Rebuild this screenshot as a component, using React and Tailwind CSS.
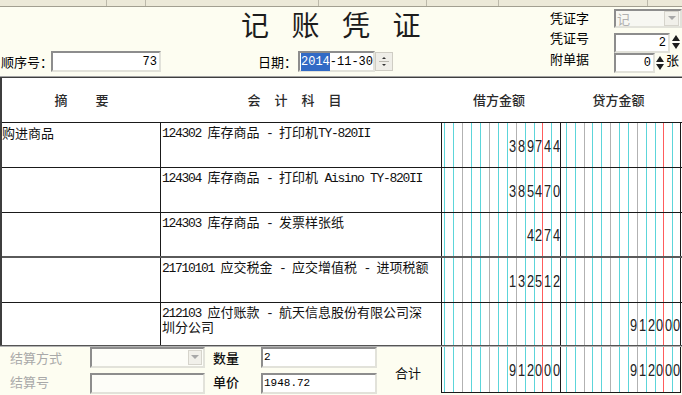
import React from 'react';

const F = "font-['Noto_Sans_CJK_SC','Liberation_Sans',sans-serif]";

const W = { 3: 'w-[3px]', 6: 'w-[6px]', 8: 'w-[8px]', 9: 'w-[9px]' };
const C = {
  c: 'border-r-[#5cd5da]',
  g: 'border-r-[#b2b2b2]',
  r: 'border-r-[#ff5c5c]',
  k: 'border-r-[#1a1a1a]',
};

const DEBIT = [[3,'c'],[9,'c'],[9,'g'],[9,'c'],[9,'c'],[9,'g'],[9,'c'],[9,'c'],[9,'g'],[9,'c'],[9,'c'],[8,'r'],[9,'c'],[9,'k']];
const CREDIT = [[6,'c'],[9,'c'],[9,'g'],[8,'c'],[9,'c'],[9,'g'],[9,'c'],[9,'c'],[9,'g'],[9,'c'],[9,'c'],[8,'r'],[9,'c'],[8,'k']];

function Money({ cells, value }) {
  const n = cells.length;
  const digits = (value || '').padStart(n, ' ');
  return cells.map(([w, c], i) => (
    <div key={i} className={`${W[w]} ${C[c]} shrink-0 h-full border-r flex items-center justify-center pt-[3px]`}>
      <span className="block scale-x-[0.8] font-['Liberation_Sans',sans-serif] text-[16px] leading-none text-[#222]">
        {digits[i] === ' ' ? '' : digits[i]}
      </span>
    </div>
  ));
}

function Mixed({ text }) {
  const parts = text.split(/([\x00-\x7F]+)/).filter(Boolean);
  return parts.map((p, i) =>
    /^[\x00-\x7F]+$/.test(p) ? (
      <span key={i} className="font-['Liberation_Mono',monospace] text-[13px] tracking-[-1.3px] whitespace-pre">{p}</span>
    ) : (
      <span key={i}>{p}</span>
    )
  );
}

function Sunken({ className = '', children }) {
  return (
    <div className={`shrink-0 border-2 border-t-[#8d8d8d] border-l-[#8d8d8d] border-r-[#e2e2da] border-b-[#e2e2da] ${className}`}>
      {children}
    </div>
  );
}

function SpinArrows({ className = '' }) {
  return (
    <svg className={className} viewBox="0 0 10 18" width="10" height="18">
      <polygon points="1,8 5,2 9,8" fill="#1e1e1e" />
      <line x1="0" y1="9" x2="10" y2="9" stroke="#ffffff" strokeWidth="1" />
      <polygon points="1,10 9,10 5,16" fill="#1e1e1e" />
    </svg>
  );
}

function DropBtn({ className = '' }) {
  return (
    <div className={`shrink-0 flex items-center justify-center bg-[#f1f0ea] border border-[#d6d4cc] ${className}`}>
      <svg viewBox="0 0 8 5" width="8" height="5">
        <polygon points="0,0 8,0 4,4" fill="#a8a8a8" />
      </svg>
    </div>
  );
}

const ROWS = [
  { s: '购进商品', k: ['124302 库存商品 - 打印机TY-820II'], d: '389744', c: '' },
  { s: '', k: ['124304 库存商品 - 打印机 Aisino TY-820II'], d: '385470', c: '' },
  { s: '', k: ['124303 库存商品 - 发票样张纸'], d: '4274', c: '', thick: true },
  { s: '', k: ['21710101 应交税金 - 应交增值税 - 进项税额'], d: '132512', c: '' },
  { s: '', k: ['212103 应付账款 - 航天信息股份有限公司深', '圳分公司'], d: '', c: '912000', last: true },
];

function Row({ r }) {
  const h = r.last ? 'h-[42px]' : r.thick ? 'h-[45px] border-b-2 border-b-[#5a5a5a]' : 'h-[45px] border-b border-b-[#1a1a1a]';
  return (
    <div className={`${h} shrink-0 flex`}>
      <div className="w-[159px] shrink-0 h-full border-r border-r-[#1a1a1a] pt-[3px] text-[13px] leading-[13px] text-[#111] whitespace-nowrap">
        {r.s}
      </div>
      <div className="w-[281px] shrink-0 h-full border-r border-r-[#1a1a1a] pl-[1px] pt-[3px] text-[13px] leading-[13px] text-[#111] font-['Liberation_Sans','Noto_Sans_CJK_SC',sans-serif]">
        {r.k.map((line, i) => (
          <div key={i} className={`whitespace-nowrap ${i > 0 ? 'h-[13px] mt-[2px]' : 'h-[13px]'}`}>
            <Mixed text={line} />
          </div>
        ))}
      </div>
      <Money cells={DEBIT} value={r.d} />
      <Money cells={CREDIT} value={r.c} />
      <div className="flex-1" />
    </div>
  );
}

export default function App() {
  return (
    <div className={`${F} w-[682px] h-[395px] overflow-hidden bg-[#fdfdf1] text-black flex flex-col`}>
      {/* toolbar remnant */}
      <div className="h-[7px] shrink-0 flex bg-[#ece9d8] border-b border-b-[#a29f90]">
        <div className="w-[107px] shrink-0 border-r border-r-[#bcb9aa]" />
        <div className="w-[39px] shrink-0 border-r border-r-[#bcb9aa]" />
        <div className="w-[173px] shrink-0 border-r border-r-[#bcb9aa]" />
        <div className="w-[108px] shrink-0 border-r border-r-[#bcb9aa]" />
        <div className="w-[72px] shrink-0 border-r border-r-[#bcb9aa]" />
        <div className="w-[149px] shrink-0 border-r border-r-[#bcb9aa]" />
        <div className="flex-1" />
      </div>

      {/* header */}
      <div className="h-[69px] shrink-0 flex">
        <div className="w-[550px] shrink-0 flex flex-col">
          <div className="h-[44px] pt-[3px] pl-[241px] text-[28px] leading-[28px] tracking-[22.5px] text-[#1c1c1c] whitespace-nowrap">
            记账凭证
          </div>
          <div className="h-[21px] flex items-center text-[13px]">
            <span className="w-[51px] shrink-0 pl-[1px] whitespace-nowrap">顺序号：</span>
            <Sunken className="w-[110px] h-[21px] bg-white flex items-center justify-end pr-[2px] font-['Liberation_Mono',monospace] text-[12px]">
              73
            </Sunken>
            <span className="ml-[97px] w-[40px] shrink-0 whitespace-nowrap">日期：</span>
            <Sunken className="w-[77px] h-[21px] bg-white flex items-center pl-[1px] font-['Liberation_Mono',monospace] text-[12px] whitespace-pre">
              <span className="bg-[#316ac5] text-white">2014</span>
              <span>-11-30</span>
            </Sunken>
            <div className="w-[18px] h-[19px] shrink-0 bg-[#efeee8] border border-[#cfcdc4] flex flex-col items-center justify-center">
              <svg viewBox="0 0 14 15" width="14" height="15">
                <polygon points="5,5 7,3 9,5" fill="#333" />
                <line x1="2" y1="7.5" x2="12" y2="7.5" stroke="#b9b7ae" strokeWidth="1" />
                <polygon points="5,10 9,10 7,12" fill="#333" />
              </svg>
            </div>
          </div>
        </div>

        <div className="flex-1 flex flex-col pt-[2px] text-[13px] leading-[14px]">
          <div className="h-[21px] flex">
            <span className="w-[64px] shrink-0 pt-[2px]">凭证字</span>
            <Sunken className="w-[68px] h-[19px] bg-[#f7f7f2] flex items-center">
              <span className="flex-1 pl-[1px] text-[#b0b0b0]">记</span>
              <DropBtn className="w-[15px] h-[15px] mr-[1px]" />
            </Sunken>
          </div>
          <div className="h-[22px] flex">
            <span className="w-[64px] shrink-0 pt-[1px]">凭证号</span>
            <Sunken className="mt-[3px] w-[56px] h-[20px] bg-white flex items-center justify-end pr-[2px] font-['Liberation_Mono',monospace] text-[12px]">
              2
            </Sunken>
            <SpinArrows className="mt-[3px] ml-[1px] shrink-0" />
          </div>
          <div className="h-[22px] flex">
            <span className="w-[64px] shrink-0">附单据</span>
            <Sunken className="mt-[1px] w-[41px] h-[20px] bg-white flex items-center justify-end pr-[2px] font-['Liberation_Mono',monospace] text-[12px]">
              0
            </Sunken>
            <SpinArrows className="mt-[2px] shrink-0" />
            <span className="pt-[1px] ml-[1px] whitespace-nowrap">张</span>
          </div>
        </div>
      </div>

      {/* table */}
      <div className="shrink-0 border-t border-t-[#a3a3a3]">
        <div className="border-t border-t-[#3e3e3e] border-l-2 border-l-[#3e3e3e] bg-white flex flex-col">
          <div className="h-[45px] shrink-0 flex border-b border-b-[#1a1a1a] text-[13px] font-medium text-[#2a2a2a]">
            <div className="w-[159px] shrink-0 flex items-center justify-center gap-[28px]">
              <span>摘</span>
              <span>要</span>
            </div>
            <div className="w-[281px] shrink-0 flex items-center justify-center gap-[14px] pr-[14px]">
              <span>会</span>
              <span>计</span>
              <span>科</span>
              <span>目</span>
            </div>
            <div className="w-[119px] shrink-0 flex items-center justify-center pr-[5px]">借方金额</div>
            <div className="w-[120px] shrink-0 flex items-center justify-center pr-[5px]">贷方金额</div>
            <div className="flex-1" />
          </div>
          {ROWS.map((r, i) => (
            <Row key={i} r={r} />
          ))}
        </div>
      </div>

      {/* bottom */}
      <div className="flex-1 border-t border-t-[#555555]">
        <div className="h-full border-t border-t-[#b4b4b4] flex text-[13px]">
          <div className="w-[90px] shrink-0 pl-[10px] flex flex-col text-[#a9a9a9]">
            <div className="h-[21px] flex items-center">结算方式</div>
            <div className="h-[21px] mt-[5px] flex items-center pb-[4px]">结算号</div>
          </div>
          <div className="w-[115px] shrink-0 flex flex-col">
            <Sunken className="h-[21px] bg-[#fdfdf8] flex items-center justify-end">
              <DropBtn className="w-[14px] h-[15px] mr-[1px]" />
            </Sunken>
            <Sunken className="h-[21px] mt-[5px] bg-[#fdfdf8]" />
          </div>
          <div className="w-[56px] shrink-0 pl-[8px] flex flex-col font-medium text-[#111]">
            <div className="h-[21px] flex items-center">数量</div>
            <div className="h-[21px] mt-[5px] flex items-center pb-[4px]">单价</div>
          </div>
          <div className="w-[116px] shrink-0 flex flex-col font-['Liberation_Mono',monospace] text-[11px]">
            <Sunken className="h-[21px] bg-white flex items-center pl-[1px]">2</Sunken>
            <Sunken className="h-[21px] mt-[5px] bg-white flex items-center pl-[1px]">1948.72</Sunken>
          </div>
          <div className="w-[64px] shrink-0 pl-[18px] flex items-center pt-[3px] text-[#111]">合计</div>
          <div className="h-[46px] shrink-0 flex border-l border-b border-[#1a1a1a] bg-white">
            <Money cells={DEBIT} value="912000" />
            <Money cells={CREDIT} value="912000" />
          </div>
          <div className="flex-1" />
        </div>
      </div>
    </div>
  );
}
